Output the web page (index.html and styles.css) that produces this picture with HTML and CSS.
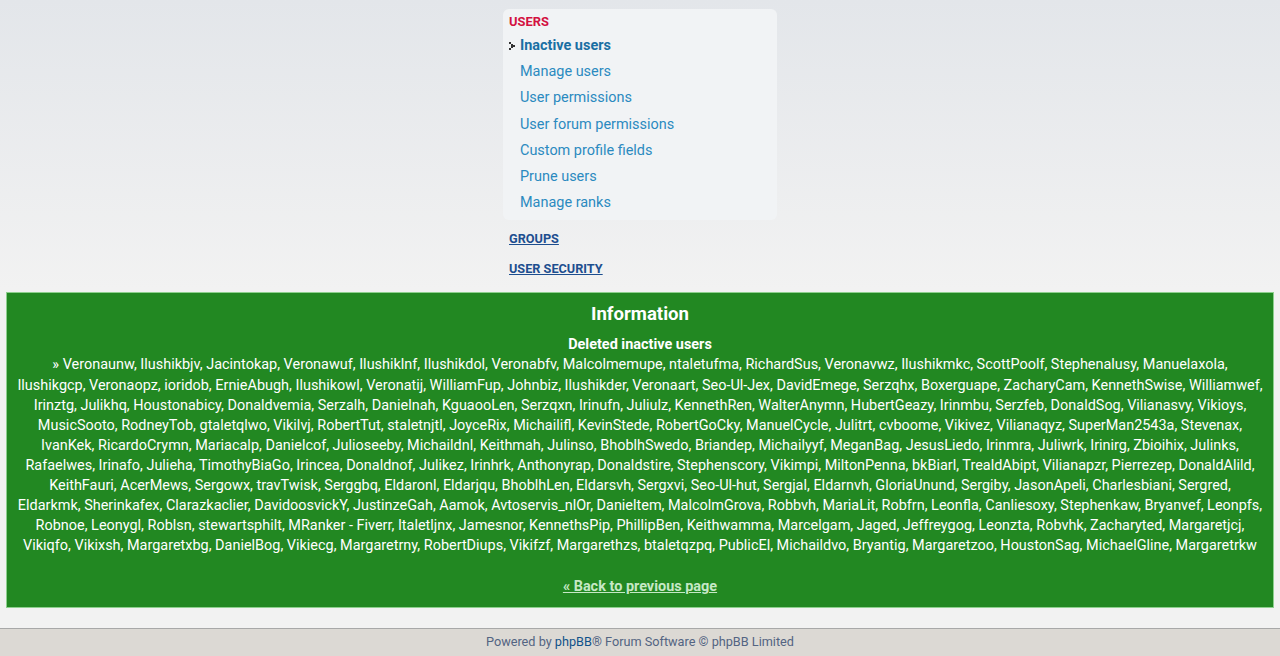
FILE: index.html
```html
<!DOCTYPE html>
<html lang="en">
<head>
<meta charset="utf-8">
<title>Inactive users</title>
<link rel="stylesheet" href="styles.css">
</head>
<body>
<div class="page">
  <nav class="side">
    <div class="menu-block active-block">
      <h3 class="menu-title">USERS</h3>
      <ul class="menu-list">
        <li class="menu-item current">
          <svg class="cur-arrow" width="7" height="8" viewBox="0 0 7 8" aria-hidden="true">
            <rect x="0" y="0" width="2" height="2" fill="#333"/>
            <rect x="2" y="2" width="2" height="2" fill="#333"/>
            <rect x="4" y="3" width="2" height="2" fill="#333"/>
            <rect x="2" y="4" width="2" height="2" fill="#333"/>
            <rect x="0" y="6" width="2" height="2" fill="#333"/>
          </svg>
          <a href="#">Inactive users</a>
        </li>
        <li class="menu-item"><a href="#">Manage users</a></li>
        <li class="menu-item"><a href="#">User permissions</a></li>
        <li class="menu-item"><a href="#">User forum permissions</a></li>
        <li class="menu-item"><a href="#">Custom profile fields</a></li>
        <li class="menu-item"><a href="#">Prune users</a></li>
        <li class="menu-item"><a href="#">Manage ranks</a></li>
      </ul>
    </div>
    <a class="menu-section" href="#">GROUPS</a>
    <a class="menu-section" href="#">USER SECURITY</a>
  </nav>

  <div class="successbox">
    <h2 class="box-title">Information</h2>
    <p class="box-text"><strong>Deleted inactive users</strong><br>» Veronaunw, Ilushikbjv, Jacintokap, Veronawuf, Ilushiklnf, Ilushikdol, Veronabfv, Malcolmemupe, ntaletufma, RichardSus, Veronavwz, Ilushikmkc, ScottPoolf, Stephenalusy, Manuelaxola, Ilushikgcp, Veronaopz, ioridob, ErnieAbugh, Ilushikowl, Veronatij, WilliamFup, Johnbiz, Ilushikder, Veronaart, Seo-Ul-Jex, DavidEmege, Serzqhx, Boxerguape, ZacharyCam, KennethSwise, Williamwef, Irinztg, Julikhq, Houstonabicy, Donaldvemia, Serzalh, Danielnah, KguaooLen, Serzqxn, Irinufn, Juliulz, KennethRen, WalterAnymn, HubertGeazy, Irinmbu, Serzfeb, DonaldSog, Vilianasvy, Vikioys, MusicSooto, RodneyTob, gtaletqlwo, Vikilvj, RobertTut, staletnjtl, JoyceRix, Michailifl, KevinStede, RobertGoCky, ManuelCycle, Julitrt, cvboome, Vikivez, Vilianaqyz, SuperMan2543a, Stevenax, IvanKek, RicardoCrymn, Mariacalp, Danielcof, Julioseeby, Michaildnl, Keithmah, Julinso, BhoblhSwedo, Briandep, Michailyyf, MeganBag, JesusLiedo, Irinmra, Juliwrk, Irinirg, Zbioihix, Julinks, Rafaelwes, Irinafo, Julieha, TimothyBiaGo, Irincea, Donaldnof, Julikez, Irinhrk, Anthonyrap, Donaldstire, Stephenscory, Vikimpi, MiltonPenna, bkBiarl, TrealdAbipt, Vilianapzr, Pierrezep, DonaldAlild, KeithFauri, AcerMews, Sergowx, travTwisk, Serggbq, Eldaronl, Eldarjqu, BhoblhLen, Eldarsvh, Sergxvi, Seo-Ul-hut, Sergjal, Eldarnvh, GloriaUnund, Sergiby, JasonApeli, Charlesbiani, Sergred, Eldarkmk, Sherinkafex, Clarazkaclier, DavidoosvickY, JustinzeGah, Aamok, Avtoservis_nlOr, Danieltem, MalcolmGrova, Robbvh, MariaLit, Robfrn, Leonfla, Canliesoxy, Stephenkaw, Bryanvef, Leonpfs, Robnoe, Leonygl, Roblsn, stewartsphilt, MRanker - Fiverr, Italetljnx, Jamesnor, KennethsPip, PhillipBen, Keithwamma, Marcelgam, Jaged, Jeffreygog, Leonzta, Robvhk, Zacharyted, Margaretjcj, Vikiqfo, Vikixsh, Margaretxbg, DanielBog, Vikiecg, Margaretrny, RobertDiups, Vikifzf, Margarethzs, btaletqzpq, PublicEl, Michaildvo, Bryantig, Margaretzoo, HoustonSag, MichaelGline, Margaretrkw</p>
    <p class="box-back"><a href="#">« Back to previous page</a></p>
  </div>
</div>

<footer class="footer">
  Powered by <a href="#">phpBB</a>® Forum Software © phpBB Limited
</footer>
</body>
</html>
```

FILE: styles.css
```css
* {
  box-sizing: border-box;
}

html, body {
  margin: 0;
  padding: 0;
}

body {
  font-family: Roboto, "Liberation Sans", Arial, sans-serif;
  font-size: 14.45px;
  color: #333;
  background: linear-gradient(to bottom, #e3e6ea 0px, #f2f2f2 290px, #f2f2f2 100%);
  min-height: 656px;
  display: flex;
  flex-direction: column;
}

.page {
  flex: 1;
  padding-top: 9px;
}

/* Side navigation, stacked above the content */
.side {
  width: 274px;
  margin: 0 auto;
  display: flex;
  flex-direction: column;
}

.menu-block {
  background: #f1f3f5;
  border-radius: 6px;
  padding: 5px 6px 4px 6px;
}

.menu-title {
  margin: 0 0 3px 0;
  font-size: 12.9px;
  line-height: 16px;
  font-weight: 700;
  color: #d31141;
}

.menu-list {
  list-style: none;
  margin: 0;
  padding: 0;
}

.menu-item {
  position: relative;
  line-height: 26.2px;
  height: 26.2px;
  padding-left: 11px;
  font-size: 14.45px;
}

.menu-item a {
  color: #2b8ac0;
  text-decoration: none;
}

.menu-item.current a {
  color: #1a6fa3;
  font-weight: 700;
}

.cur-arrow {
  position: absolute;
  left: 0;
  top: 9px;
}

.menu-section {
  display: block;
  padding-left: 6px;
  font-size: 12.7px;
  line-height: 16px;
  font-weight: 700;
  color: #1d4e8f;
  text-decoration: underline;
  margin-top: 11px;
}

.menu-section + .menu-section {
  margin-top: 14px;
}

/* Message box */
.successbox {
  margin: 15px 6px 0 6px;
  background: #228822;
  border: 1px solid #8ed08e;
  color: #fff;
  text-align: center;
  padding: 10px 10px 10px 10px;
}

.box-title {
  margin: 0 0 10px 0;
  font-size: 18.6px;
  line-height: 22px;
  font-weight: 700;
}

.box-text {
  margin: 0;
  font-size: 14.45px;
  line-height: 20.1px;
}

.box-back {
  margin: 21px 0 0 0;
  font-size: 14.45px;
  line-height: 20px;
}

.box-back a {
  color: #c6e8c6;
  font-weight: 700;
  text-decoration: underline;
}

/* Footer */
.footer {
  margin-top: 19px;
  border-top: 1px solid #a8a8a8;
  background: #dcd9d4;
  text-align: center;
  font-size: 12.7px;
  line-height: 26px;
  height: 28px;
  color: #536482;
}

.footer a {
  color: #105289;
  text-decoration: none;
}
```
